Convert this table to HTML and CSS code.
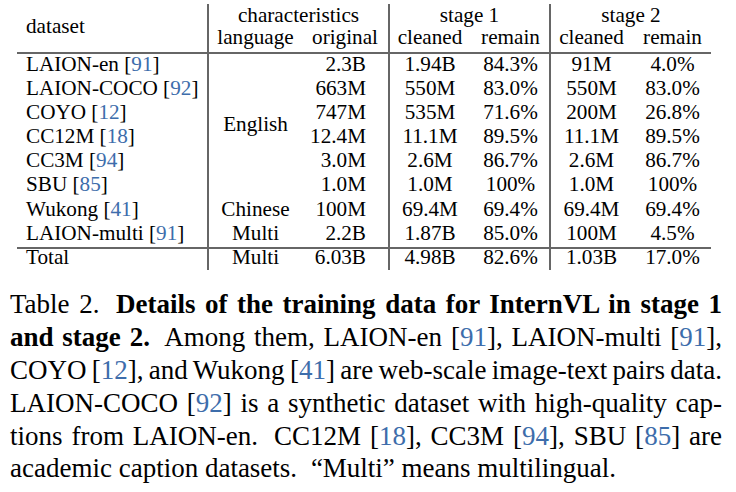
FILE: index.html
```html
<!DOCTYPE html>
<html lang="en">
<head>
<meta charset="utf-8">
<title>Table 2</title>
<link rel="stylesheet" href="styles.css">
</head>
<body>
<div class="page">
  <div class="tbl">
    <div class="c hd1 dataset vr">dataset</div>
    <div class="c hd1 span2 vr">characteristics</div>
    <div class="c hd1 span2 vr">stage 1</div>
    <div class="c hd1 span2">stage 2</div>
    <div class="c hd2">language</div>
    <div class="c hd2 vr">original</div>
    <div class="c hd2">cleaned</div>
    <div class="c hd2 rem vr">remain</div>
    <div class="c hd2">cleaned</div>
    <div class="c hd2 rem">remain</div>
    <div class="rule"></div>

    <div class="c name vr">LAION-en [<span class="cite">91</span>]</div>
    <div class="c lang english">English</div>
    <div class="c orig vr">2.3B</div>
    <div class="c">1.94B</div>
    <div class="c rem vr">84.3%</div>
    <div class="c">91M</div>
    <div class="c rem">4.0%</div>

    <div class="c name vr">LAION-COCO [<span class="cite">92</span>]</div>
    <div class="c orig vr">663M</div>
    <div class="c">550M</div>
    <div class="c rem vr">83.0%</div>
    <div class="c">550M</div>
    <div class="c rem">83.0%</div>

    <div class="c name vr">COYO [<span class="cite">12</span>]</div>
    <div class="c orig vr">747M</div>
    <div class="c">535M</div>
    <div class="c rem vr">71.6%</div>
    <div class="c">200M</div>
    <div class="c rem">26.8%</div>

    <div class="c name vr">CC12M [<span class="cite">18</span>]</div>
    <div class="c orig vr">12.4M</div>
    <div class="c">11.1M</div>
    <div class="c rem vr">89.5%</div>
    <div class="c">11.1M</div>
    <div class="c rem">89.5%</div>

    <div class="c name vr">CC3M [<span class="cite">94</span>]</div>
    <div class="c orig vr">3.0M</div>
    <div class="c">2.6M</div>
    <div class="c rem vr">86.7%</div>
    <div class="c">2.6M</div>
    <div class="c rem">86.7%</div>

    <div class="c name vr">SBU [<span class="cite">85</span>]</div>
    <div class="c orig vr">1.0M</div>
    <div class="c">1.0M</div>
    <div class="c rem vr">100%</div>
    <div class="c">1.0M</div>
    <div class="c rem">100%</div>

    <div class="c name vr">Wukong [<span class="cite">41</span>]</div>
    <div class="c lang">Chinese</div>
    <div class="c orig vr">100M</div>
    <div class="c">69.4M</div>
    <div class="c rem vr">69.4%</div>
    <div class="c">69.4M</div>
    <div class="c rem">69.4%</div>

    <div class="c name vr">LAION-multi [<span class="cite">91</span>]</div>
    <div class="c lang">Multi</div>
    <div class="c orig vr">2.2B</div>
    <div class="c">1.87B</div>
    <div class="c rem vr">85.0%</div>
    <div class="c">100M</div>
    <div class="c rem">4.5%</div>

    <div class="rule"></div>

    <div class="c tot name vr">Total</div>
    <div class="c tot lang">Multi</div>
    <div class="c tot orig vr">6.03B</div>
    <div class="c tot">4.98B</div>
    <div class="c tot rem vr">82.6%</div>
    <div class="c tot">1.03B</div>
    <div class="c tot rem">17.0%</div>
  </div>

  <p class="caption">
    <span class="ln">Table 2.<span class="ss"></span> <b>Details of the training data for InternVL in stage 1</b></span>
    <span class="ln"><b>and stage 2.</b><span class="ss"></span> Among them, LAION-en [<span class="cite">91</span>], LAION-multi [<span class="cite">91</span>],</span>
    <span class="ln">COYO [<span class="cite">12</span>], and Wukong [<span class="cite">41</span>] are web-scale image-text pairs data.</span>
    <span class="ln">LAION-COCO [<span class="cite">92</span>] is a synthetic dataset with high-quality cap-</span>
    <span class="ln">tions from LAION-en.<span class="ss"></span> CC12M [<span class="cite">18</span>], CC3M [<span class="cite">94</span>], SBU [<span class="cite">85</span>] are</span>
    <span class="ln last">academic caption datasets.<span class="ss"></span> “Multi” means multilingual.</span>
  </p>
</div>
</body>
</html>
```

FILE: styles.css
```css
html, body {
  margin: 0;
  padding: 0;
  background: #ffffff;
}

body {
  font-family: "Liberation Serif", "Times New Roman", serif;
  color: #000000;
}

.page {
  width: 736px;
  height: 492px;
  overflow: hidden;
}

.tbl {
  display: grid;
  grid-template-columns: 192px 93px 88px 80px 81px 81px 79px;
  grid-template-rows: 23px 25px 2px repeat(8, 24.1px) 2px 21px;
  width: 694px;
  margin: 4px 0 0 17px;
  font-size: 21.2px;
  line-height: 20px;
}

.c {
  box-sizing: border-box;
  text-align: center;
  white-space: nowrap;
}

.vr {
  border-right: 2px solid #666666;
}

.hd1 {
  padding-top: 1px;
}

.hd2 {
  line-height: 21px;
}

.dataset {
  grid-row: span 2;
  text-align: left;
  padding-left: 9px;
  padding-top: 12px;
}

.span2 {
  grid-column: span 2;
}

.rule {
  grid-column: 1 / -1;
  background: #666666;
}

.name {
  text-align: left;
  padding-left: 9px;
}

.orig {
  text-align: right;
  padding-right: 22px;
}

.rem {
  padding-left: 2px;
}

.english {
  grid-row: span 6;
  display: flex;
  align-items: center;
  justify-content: center;
  padding-bottom: 4px;
}

.tot {
  line-height: 16px;
}

.cite {
  color: #3d6dab;
}

.caption {
  width: 712px;
  margin: 18.7px 0 0 10px;
  font-size: 27px;
  line-height: 32.8px;
}

.ln {
  display: block;
  text-align: justify;
  text-align-last: justify;
  word-spacing: -3px;
}

.ln.last {
  text-align-last: left;
  word-spacing: 0;
}

.ss {
  display: inline-block;
  width: 7px;
}
```
